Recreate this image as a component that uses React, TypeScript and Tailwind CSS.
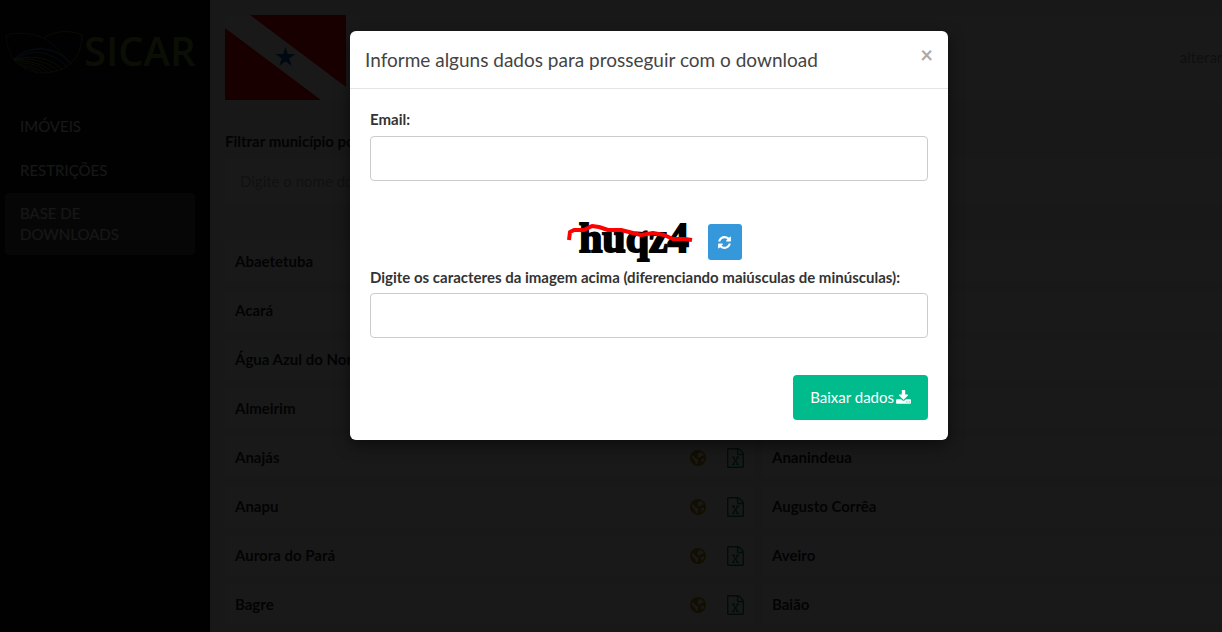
import type { ReactNode } from "react";

const municipalities: [string, string][] = [
  ["Abaetetuba", "Abel Figueiredo"],
  ["Acará", "Afuá"],
  ["Água Azul do Norte", "Alenquer"],
  ["Almeirim", "Altamira"],
  ["Anajás", "Ananindeua"],
  ["Anapu", "Augusto Corrêa"],
  ["Aurora do Pará", "Aveiro"],
  ["Bagre", "Baião"],
];

function RefreshIcon() {
  return (
    <svg viewBox="0 0 1792 1792" className="size-[15px]" fill="currentColor" aria-hidden="true">
      <path d="M1639 1056q0 5-1 7-64 268-268 434.5t-478 166.5q-146 0-282.5-55t-243.5-157l-129 129q-19 19-45 19t-45-19-19-45v-448q0-26 19-45t45-19h448q26 0 45 19t19 45-19 45l-137 137q71 66 161 102t187 36q134 0 250-65t186-179q11-17 53-117 8-23 30-23h192q13 0 22.5 9.5t9.5 22.5zm25-800v448q0 26-19 45t-45 19h-448q-26 0-45-19t-19-45 19-45l138-138q-148-137-349-137-134 0-250 65t-186 179q-11 17-53 117-8 23-30 23h-199q-13 0-22.5-9.5t-9.5-22.5v-7q65-268 270-434.5t480-166.5q146 0 284 55.5t245 156.5l130-129q19-19 45-19t45 19 19 45z" />
    </svg>
  );
}

function DownloadIcon() {
  return (
    <svg viewBox="64 0 1664 1792" className="h-4 w-[15px]" fill="currentColor" aria-hidden="true">
      <path d="M1344 1344q0-26-19-45t-45-19-45 19-19 45 19 45 45 19 45-19 19-45zm256 0q0-26-19-45t-45-19-45 19-19 45 19 45 45 19 45-19 19-45zm128-224v320q0 40-28 68t-68 28h-1472q-40 0-68-28t-28-68v-320q0-40 28-68t68-28h465l135 136q58 56 136 56t136-56l136-136h464q40 0 68 28t28 68zm-325-569q17 41-14 70l-448 448q-18 19-45 19t-45-19l-448-448q-31-29-14-70 17-39 59-39h256v-448q0-26 19-45t45-19h256q26 0 45 19t19 45v448h256q42 0 59 39z" />
    </svg>
  );
}

function GlobeIcon() {
  return (
    <svg viewBox="0 0 16 16" className="size-4" aria-hidden="true">
      <circle cx="8" cy="8" r="8" fill="currentColor" />
      <path
        d="M9.400 2.200 11.800 2.800 13.600 4.600 12.400 6 11.600 5.400 10.600 6.800 9 7.600 7.600 7 8.200 5.400 7.400 4.600 8.600 3.600ZM2.200 5.600 4 6.400 5.600 8.200 7.400 9.200 8.400 10.600 7.600 12.200 7 14.200 5.800 13.600 5.200 11.200 3.600 9.200 2 7.600ZM11 9.200 13.400 8.400 14.200 9.200 13 11.800 11.400 12.800 11.600 10.800Z"
        fill="white"
      />
    </svg>
  );
}

function SpreadsheetIcon() {
  return (
    <svg viewBox="0 0 1536 1792" className="h-5 w-[17px]" fill="currentColor" aria-hidden="true">
      <path d="M1468 380q28 28 48 76t20 88v1152q0 40-28 68t-68 28h-1344q-40 0-68-28t-28-68v-1600q0-40 28-68t68-28h896q40 0 88 20t76 48zm-444-244v376h376q-10-29-22-41l-313-313q-12-12-41-22zm384 1528v-1024h-416q-40 0-68-28t-28-68v-416h-768v1536h1280zm-979-234v106h281v-106h-75l103-161q5-7 10-16.5t7.5-13.5 3.5-4h2q1 4 5 10 2 4 4.5 7.5t6 8 6.5 8.5l107 161h-76v106h291v-106h-68l-192-273 195-282h67v-107h-279v107h74l-103 159q-4 7-10 16.5t-9 13.5l-2 3h-2q-1-4-5-10-6-11-17-23l-106-159h76v-107h-290v107h68l189 272-194 283h-68z" />
    </svg>
  );
}

function Logo() {
  return (
    <svg viewBox="0 0 190 50" className="w-full" role="img" aria-label="SICAR">
      <g fill="none" strokeWidth="1">
        <path d="M1 5C1 14 5 24 9 30C17 38 26 43 38 43" stroke="#2a6a60" />
        <path d="M1 5C12 2 28 3 38 8C48 13 54 20 60 28" stroke="#2a6a60" />
        <path d="M39 8C50 0 66 0 77 5C77 22 68 42 39 43" stroke="#5d7a20" />
        <path d="M9 30C22 15 50 14 66 34" stroke="#2878a8" strokeWidth="1.4" />
        <path d="M13 28C28 18 48 22 62 37" stroke="#2878a8" />
        <path d="M9 30C26 24 45 28 57 39M9 30C24 27 42 31 53 41M10 31C24 30 38 34 48 42M12 33C24 32 36 36 43 43M14 35C24 35 32 38 38 43M18 37C24 37 30 40 33 43" stroke="#6d8420" />
      </g>
      <text x="79" y="36" fontFamily="'Open Sans', sans-serif" fontWeight="600" fontSize="40" fill="#75902a">
        SICAR
      </text>
    </svg>
  );
}

function Flag() {
  return (
    <svg viewBox="0 0 121 85" className="h-[85px] w-[121px]" role="img" aria-label="Bandeira do Pará">
      <path d="M0 0H121V85H0Z" fill="white" />
      <path d="M25 0H121V72ZM0 13 96 85H0Z" fill="#ff0000" />
      <path d="M60.500 31.500 62.800 38.900H70.500L64.300 43.500 66.600 51 60.500 46.500 54.200 51 56.600 43.500 50.500 38.900H58.200Z" fill="#0060b0" />
    </svg>
  );
}

function Captcha() {
  return (
    <svg viewBox="0 0 130 50" className="h-[50px] w-[130px]" role="img" aria-label="Captcha">
      <text x="14" y="35" fontFamily="'Liberation Serif', serif" fontWeight="700" fontSize="42" fill="black" stroke="black" strokeWidth="2">
        huqz4
      </text>
      <path
        d="M4 23 5 15 9 13 19 13 27 9 34 10 43 13 56 13 68 16 76 18 88 16 99 18 108 22 120 22 127 23"
        fill="none"
        stroke="red"
        strokeWidth="4"
        strokeLinejoin="round"
      />
    </svg>
  );
}

function NavLink({ active = false, children }: { active?: boolean; children: ReactNode }) {
  return (
    <a
      href="#"
      className={
        active
          ? "rounded bg-[#404040] px-[15px] py-[10px] leading-[21px]"
          : "rounded px-[15px] py-[11px] leading-[21px]"
      }
    >
      {children}
    </a>
  );
}

function Municipality({ name }: { name: string }) {
  return (
    <li className="flex h-[41px] items-center bg-white px-[10px] font-bold">
      <span className="grow">{name}</span>
      <a href="#" aria-label={"Mapa de " + name} className="mr-[21px] text-[#b88a10]">
        <GlobeIcon />
      </a>
      <a href="#" aria-label={"Planilha de " + name} className="text-[#008a60]">
        <SpreadsheetIcon />
      </a>
    </li>
  );
}

export default function App() {
  return (
    <div className="relative flex h-screen overflow-hidden bg-[#f0f0f0] font-[Lato,sans-serif] text-[15px] leading-[21px]">
      <aside className="w-[210px] shrink-0 bg-[#0a0a0a] pt-[30px] pr-[15px] pl-[5px] text-[#e8e8e8]">
        <a href="#" className="block">
          <Logo />
        </a>
        <nav className="mt-[25px] flex flex-col gap-px">
          <NavLink>IMÓVEIS</NavLink>
          <NavLink>RESTRIÇÕES</NavLink>
          <NavLink active>
            BASE DE
            <br />
            DOWNLOADS
          </NavLink>
        </nav>
      </aside>

      <main className="min-w-[1096px] grow px-[15px] pt-[15px] text-[#222]">
        <header className="flex items-center justify-between bg-white pr-[21px]">
          <Flag />
          <a href="#" className="text-[#999]">
            alterar estado
          </a>
        </header>
        <label htmlFor="filter" className="mt-[31px] block font-bold">
          Filtrar município por nome:
        </label>
        <input
          id="filter"
          placeholder="Digite o nome do município"
          className="mt-[6px] block h-[45px] w-full rounded bg-white px-[15px] placeholder:text-[#aaa]"
        />
        <ul className="mt-[38px] grid grid-cols-2 gap-2">
          {municipalities.flat().map((name) => (
            <Municipality key={name} name={name} />
          ))}
        </ul>
      </main>

      <div className="absolute inset-0 bg-black/90 pt-[31px]">
        <section
          role="dialog"
          aria-labelledby="dialog-title"
          className="mx-auto w-[598px] max-w-full translate-x-[38px] rounded-md bg-white text-[#333] shadow-[0_5px_15px_rgba(0,0,0,0.5)]"
        >
          <header className="flex items-start justify-between border-b border-[#e5e5e5] p-[15px]">
            <h1 id="dialog-title" className="text-[19px] leading-[27px] text-[#444]">
              Informe alguns dados para prosseguir com o download
            </h1>
            <button aria-label="Fechar" className="text-[22px] leading-[18px] font-bold text-[#aaa]">
              ×
            </button>
          </header>
          <form className="p-5">
            <label htmlFor="email" className="block font-bold">
              Email:
            </label>
            <input id="email" type="email" className="mt-[6px] block h-[45px] w-full rounded border border-[#ccc] px-[15px]" />
            <div className="mt-9 flex items-center justify-center gap-[13px] pl-2">
              <Captcha />
              <button type="button" aria-label="Atualizar imagem" className="flex h-9 w-[34px] items-center justify-center rounded-[3px] bg-[#3498db] text-white">
                <RefreshIcon />
              </button>
            </div>
            <label htmlFor="captcha" className="block font-bold">
              Digite os caracteres da imagem acima (diferenciando maiúsculas de minúsculas):
            </label>
            <input id="captcha" className="mt-[5px] block h-[45px] w-full rounded border border-[#ccc] px-[15px]" />
            <div className="mt-[37px] flex justify-end">
              <button type="button" className="flex h-[45px] items-center gap-[2px] rounded bg-[#00bc8c] px-[17px] text-white">
                Baixar dados
                <DownloadIcon />
              </button>
            </div>
          </form>
        </section>
      </div>
    </div>
  );
}
